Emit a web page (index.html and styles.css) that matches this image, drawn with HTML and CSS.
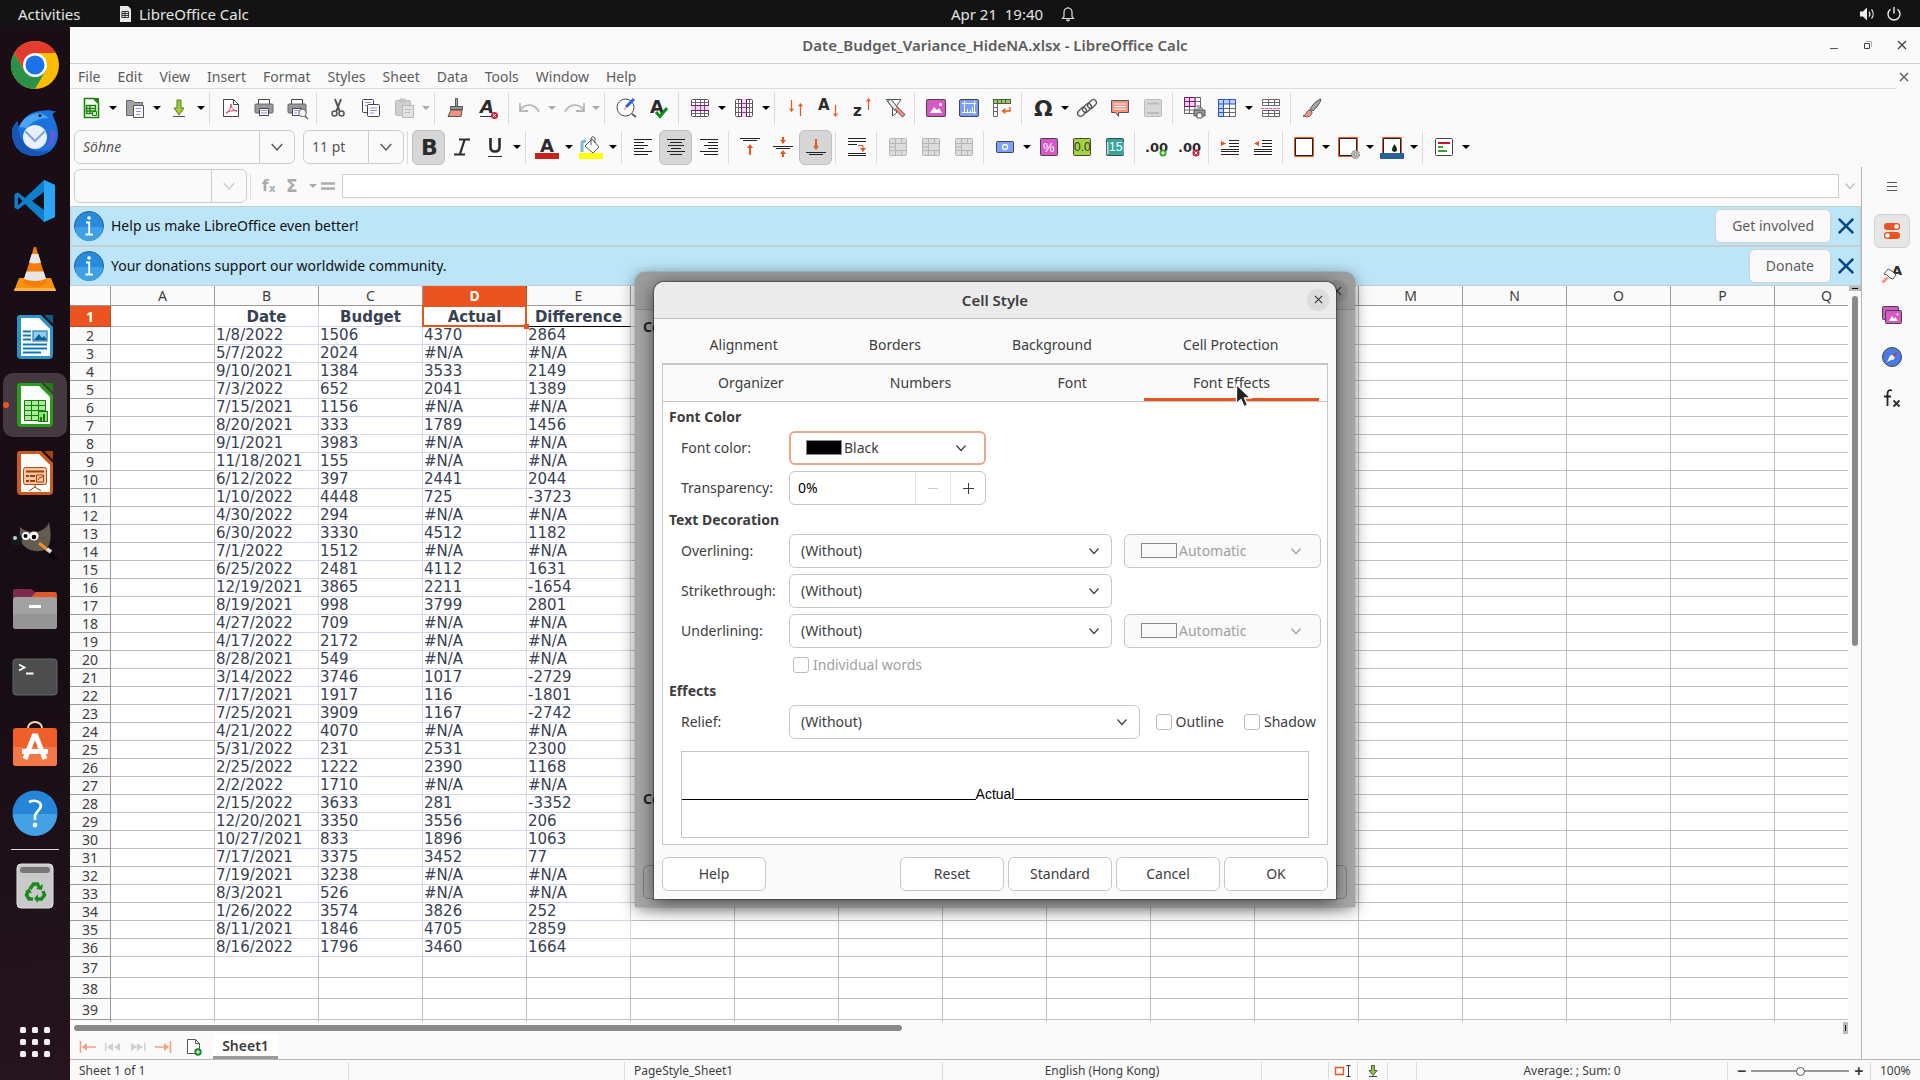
FILE: index.html
```html
<!DOCTYPE html>
<html lang="en">
<head>
    <meta charset="UTF-8">
    <title>Date_Budget_Variance_HideNA.xlsx - LibreOffice Calc</title>
    <meta name="viewport" content="width=device-width, initial-scale=1.0">
    <link rel="stylesheet" href="styles.css">
</head>
<body>
    <!-- shared shapes -->
    <svg class="defs" aria-hidden="true">
        <symbol id="chev" viewBox="0 0 12 12"><path d="M1.500 3.500 6 8.500 10.500 3.500" fill="none" stroke="currentColor" stroke-width="1.200"/></symbol>
        <symbol id="cross" viewBox="0 0 10 10"><path d="M1 1 9 9M9 1 1 9" fill="none" stroke="currentColor" stroke-width="1.400"/></symbol>
        <symbol id="merge" viewBox="0 0 24 24"><rect x="3.500" y="3.500" width="17" height="17" rx="1" fill="#dcdcdc" stroke="#b5b5b5"/><path d="M3 8.500h18M3 15.500h18M9.500 3v18M15.500 3v5M15.500 16v5M4 12h5" stroke="#b5b5b5" fill="none"/></symbol>
        <symbol id="info" viewBox="0 0 30 30"><circle cx="15" cy="15" r="14.500" fill="#2a8bdc" stroke="#24618f"/><path d="M1 16a14 14 0 0 0 28 0z" fill="#3fa0e6"/><circle cx="15" cy="7" r="1.800" fill="#fff"/><path d="M12 11.500h3.200v12M11.500 23.500h7.500" stroke="#fff" stroke-width="1.800" fill="none"/></symbol>
    </svg>

    <header class="topbar">
        <button class="top-btn">Activities</button>
        <button class="top-btn app-name">
            <svg width="12" height="16" viewBox="0 0 12 16"><path d="M1 0h8l3 3v13H1z" fill="#e8e8e8"/><path d="M3 5.500h6.500v6H3zM3 7.500h6.500M3 9.500h6.500M6 5v7" fill="none" stroke="#333"/></svg>
            LibreOffice Calc
        </button>
        <div class="clock">
            <span>Apr 21&nbsp; 19:40</span>
            <svg width="14" height="16" viewBox="0 0 14 16"><path d="M1.500 12.500h11l-1.500-2V6a4 4 0 0 0-8 0v4.500zM7 1v1.500" fill="none" stroke="#ddd" stroke-width="1.200"/><path d="M5 13.500a2 2 0 0 0 4 0z" fill="#ddd"/></svg>
        </div>
        <div class="tray">
            <svg width="16" height="16" viewBox="0 0 16 16"><path d="M1 5.500h3l4-4v13l-4-4H1z" fill="#eee"/><path d="M10 5.500a4 4 0 0 1 0 5M12.500 3.500a7 7 0 0 1 0 9" fill="none" stroke="#eee" stroke-width="1.200"/></svg>
            <svg width="16" height="16" viewBox="0 0 16 16"><path d="M4.500 3.200a6 6 0 1 0 7 0M8 1v6.500" fill="none" stroke="#eee" stroke-width="1.400"/></svg>
        </div>
    </header>

    <div class="desktop">
        <nav class="dock">
            <button class="dock-item" aria-label="Chrome">
                <svg width="48" height="48" viewBox="0 0 48 48"><circle cx="24" cy="24" r="24" fill="#fbbc04"/><path d="M3.200 12A24 24 0 0 1 44.800 12H24L13.600 30z" fill="#e33b2e"/><path d="M3.200 12A24 24 0 0 0 24 48l10.400-18-10.400 6-10.400-6z" fill="#2b9147"/><circle cx="24" cy="24" r="12" fill="#fff"/><circle cx="24" cy="24" r="9.500" fill="#1a73e8"/></svg>
            </button>
            <button class="dock-item" aria-label="Thunderbird">
                <svg width="48" height="48" viewBox="0 0 48 48"><path d="M1 20c2-4 4-7 6-8 0 3 0 5 1 6C12 8 20 3 29 2c6-1 11-1 17 1-3 0-5 1-4 4 4 8 5 14 5 18 0 13-10 22-23 22S0 38 1 20z" fill="#1a73dd"/><path d="M1 20c2-4 4-7 6-8-1 12 3 20 12 27 5 4 14 5 20 1-4 5-9 7-15 7C10 47 0 38 1 20z" fill="#1856b5"/><path d="M8 18C12 9 20 4 30 4l8 5c-9 0-17 3-22 10z" fill="#4aa5f4"/><circle cx="24" cy="28" r="12" fill="#e9f0fb"/><path d="M14 22l10 10 10-10" fill="none" stroke="#7ba4e4" stroke-width="2"/><path d="M38 21c4 7 1 15-6 19 9-2 14-10 12-18z" fill="#6a5ad8"/><circle cx="29" cy="6.500" r="1.500" fill="#123"/></svg>
            </button>
            <button class="dock-item" aria-label="VS Code">
                <svg width="44" height="44" viewBox="0 0 44 44"><path d="M31 1 12 19 5 13.500 1.500 15v14L5 30.500 12 25l19 18 11-5V6z" fill="#0f7fcb"/><path d="M31 1l11 5v32l-11 5z" fill="#2aa7f2"/><path d="M31 13v18L19 22zM5 17.500 9.500 22 5 26.500z" fill="#170d15"/></svg>
            </button>
            <button class="dock-item" aria-label="VLC">
                <svg width="44" height="48" viewBox="0 0 44 48"><path d="M6 33h32l5 13H1z" fill="#f8910c"/><path d="M21 2h2l11 36q-12 7-24 0z" fill="#f47c09"/><path d="M18.700 9h6.600l2.700 8.500q-6 2-12 0zM13.300 26.500h17.400l2.400 7.500q-11 4-22.200 0z" fill="#e6e6e6"/><path d="M2 43h40l1 3H1z" fill="#ffb347"/></svg>
            </button>
            <button class="dock-item" aria-label="Writer">
                <svg width="38" height="46" viewBox="0 0 38 46"><path d="M4 1h21l12 12v28q0 4-4 4H5q-4 0-4-4V4q0-3 3-3z" fill="#2a93c9"/><path d="M28 1h9v9z" fill="#0c5c8c"/><path d="M5 4h18l11 11v27H5z" fill="#fff"/><path d="M7 17.500h8M7 21.500h8M7 25.500h8M7 30.500h24M7 34.500h24M7 38.500h18" stroke="#0a78c0" stroke-width="2"/><rect x="17" y="17" width="14" height="10" fill="#8fd0f0" stroke="#0a5f96"/><path d="M18 26l5-6 3 4 2-2 3 4z" fill="#0a5f96"/></svg>
            </button>
            <button class="dock-item active" aria-label="Calc">
                <svg width="38" height="46" viewBox="0 0 38 46"><path d="M4 1h21l12 12v28q0 4-4 4H5q-4 0-4-4V4q0-3 3-3z" fill="#2a9c1c"/><path d="M28 1h9v9z" fill="#208010"/><path d="M5 4h18l11 11v27H5z" fill="#fff"/><path d="M8.500 18.500h21v20h-21zM8.500 23.500h21M8.500 28.500h21M8.500 33.500h21M15.500 18v20M22.500 18v20" fill="#a8ec9c" stroke="#148008"/><rect x="22.500" y="29.500" width="9" height="10" fill="#8be080" stroke="#148008"/><path d="M25 39v-4M28 39v-7" stroke="#148008" stroke-width="2"/></svg>
            </button>
            <button class="dock-item" aria-label="Impress">
                <svg width="38" height="46" viewBox="0 0 38 46"><path d="M4 1h21l12 12v28q0 4-4 4H5q-4 0-4-4V4q0-3 3-3z" fill="#cc5a1c"/><path d="M28 1h9v9z" fill="#a8400c"/><path d="M5 4h18l11 11v27H5z" fill="#fff"/><rect x="7.500" y="17.500" width="23" height="17" rx="2" fill="#f8c8a4" stroke="#b04c10"/><path d="M10 21.500h18M10 26h3M10 31h3M14 26h5M14 31h5" stroke="#a03c08" stroke-width="2"/><path d="M20.500 25h7v7h-7zM22 30l2-3 1 1 2-2M19 35v2l-6 4M19 37l6 4" fill="none" stroke="#a03c08"/></svg>
            </button>
            <button class="dock-item" aria-label="GIMP">
                <svg width="48" height="42" viewBox="0 0 48 42"><path d="M9 7c5 5 14 6 20 4 5-2 8-5 9-9 2 10 3 20-2 26-5 5-17 4-23-2C8 21 9 14 9 7z" fill="#625c50"/><ellipse cx="5.500" cy="20" rx="5.500" ry="6" fill="#15191c"/><circle cx="4" cy="18" r="2" fill="#b8d0dc"/><circle cx="15" cy="16" r="4" fill="#fff"/><circle cx="23" cy="16" r="4.500" fill="#fff"/><circle cx="14.500" cy="16" r="2"/><circle cx="23" cy="17" r="2.300"/><path d="M28 23l10 8" stroke="#e8912d" stroke-width="3"/><path d="M36 29l5 2 6 9q-8-1-11-7z" fill="#050505"/><path d="M36 29l4 3" stroke="#ddd" stroke-width="4"/></svg>
            </button>
            <button class="dock-item" aria-label="Files">
                <svg width="46" height="42" viewBox="0 0 46 42"><path d="M1 3q0-2 2-2h16l4 3h19q3 0 3 3v8H1z" fill="#7d2a4c"/><path d="M24 4h18q3 0 3 3v6H16z" fill="#e2562a"/><rect x="1" y="9" width="44" height="32" rx="3" fill="#a2a2a2"/><path d="M1 26h44v12q0 3-3 3H4q-3 0-3-3z" fill="#959595"/><path d="M17 18.500h12" stroke="#fff" stroke-width="3"/></svg>
            </button>
            <button class="dock-item" aria-label="Terminal">
                <svg width="46" height="38" viewBox="0 0 46 38"><rect x="1" y="1" width="44" height="36" rx="3" fill="#4d4d4d" stroke="#5e6668"/><path d="M7 6.500 12.500 9.500 7 12.500M14 15.500h7.500" fill="none" stroke="#fff" stroke-width="1.800"/></svg>
            </button>
            <button class="dock-item" aria-label="Software">
                <svg width="46" height="46" viewBox="0 0 46 46"><path d="M16 7V6a7 6 0 0 1 14 0v1" fill="none" stroke="#f3d9a4" stroke-width="2"/><rect x="1" y="6" width="44" height="38" rx="3" fill="#ee5f2a"/><path d="M1 25h44v16q0 3-3 3H4q-3 0-3-3z" fill="#f37747"/><path d="M13 37 22 14h2l9 23M10 29.500h26" fill="none" stroke="#fff" stroke-width="5"/></svg>
            </button>
            <button class="dock-item" aria-label="Help">
                <svg width="46" height="46" viewBox="0 0 46 46"><circle cx="23" cy="23" r="22.500" fill="#2585d8"/><path d="M1 24a22 22 0 0 0 44 0z" fill="#43a1e6"/><path d="M17 12q7-3 11 1c4 5-5 9-5 13v4" fill="none" stroke="#fff" stroke-width="2.600"/><circle cx="23" cy="35" r="2.400" fill="#fff"/></svg>
            </button>
            <hr class="dock-line">
            <button class="dock-item" aria-label="Trash">
                <svg width="38" height="46" viewBox="0 0 38 46"><rect x="1" y="1" width="36" height="44" rx="4" fill="#c9c9c9" stroke="#e2e2e2"/><rect x="4" y="4" width="30" height="6" rx="3" fill="#757575"/><path d="M14 26l3.500-5h4l2 4M27 28l1.500 4-3 4h-4M17 36h-4l-2.500-4 2-4" fill="none" stroke="#1c8a1c" stroke-width="3.500"/><path d="M20 26l6 1 1-6zM22 31v9l-4-4.500zM9 29l4-4 3 5z" fill="#1c8a1c"/></svg>
            </button>
            <button class="dock-item apps" aria-label="Show Applications">
                <svg width="30" height="30" viewBox="0 0 30 30" fill="#f0f0f0"><rect width="6" height="6" rx="1.500"/><rect x="12" width="6" height="6" rx="1.500"/><rect x="24" width="6" height="6" rx="1.500"/><rect y="12" width="6" height="6" rx="1.500"/><rect x="12" y="12" width="6" height="6" rx="1.500"/><rect x="24" y="12" width="6" height="6" rx="1.500"/><rect y="24" width="6" height="6" rx="1.500"/><rect x="12" y="24" width="6" height="6" rx="1.500"/><rect x="24" y="24" width="6" height="6" rx="1.500"/></svg>
            </button>
        </nav>

        <div class="window">
            <div class="titlebar">
                <h1>Date_Budget_Variance_HideNA.xlsx - LibreOffice Calc</h1>
                <div class="win-btns">
                    <button aria-label="Minimize"><svg width="10" height="10"><path d="M1 8.500h8" stroke="#555"/></svg></button>
                    <button aria-label="Restore"><svg width="10" height="10"><path d="M1.500 3.500h5v5h-5z" fill="none" stroke="#444"/><path d="M3 1.500h5.500V7" fill="none" stroke="#aaa"/></svg></button>
                    <button aria-label="Close"><svg width="10" height="10"><use href="#cross"/></svg></button>
                </div>
            </div>
            <div class="menubar">
                <nav class="menus">
                    <button>File</button><button>Edit</button><button>View</button><button>Insert</button><button>Format</button><button>Styles</button><button>Sheet</button><button>Data</button><button>Tools</button><button>Window</button><button>Help</button>
                </nav>
                <button class="close-doc" aria-label="Close Document"><svg width="10" height="10"><use href="#cross"/></svg></button>
            </div>

            <!-- Standard toolbar -->
            <div class="toolbar">
                <div class="split"><button class="tool" aria-label="New"><svg viewBox="0 0 24 24"><path d="M5.500 2.500h9l5 5v14h-14z" fill="#fff" stroke="#18850a" stroke-width="1.600"/><path d="M14 2h6v6z" fill="#18850a"/><path d="M7.500 9.500h9v8h-9zM7 12.500h10M7 15h10M11 9v9" fill="none" stroke="#18850a" stroke-width="1.500"/><path d="M13.500 15.500h4v4h-4z" fill="#cdebc8" stroke="#18850a"/></svg></button><button class="drop" aria-label="New options"></button></div>
                <div class="split"><button class="tool" aria-label="Open"><svg viewBox="0 0 24 24"><path d="M3.500 4.500h6l2 2h8v13h-16z" fill="#a3a3a3" stroke="#666"/><path d="M10.500 9.500h10v12h-10z" fill="#fff" stroke="#555"/><path d="M13 12.500h5M13 15.500h5M13 18.500h4" stroke="#8d8df0"/></svg></button><button class="drop" aria-label="Open options"></button></div>
                <div class="split"><button class="tool" aria-label="Save"><svg viewBox="0 0 24 24"><path d="M10 4h4v8h3l-5 7-5-7h3z" fill="#9ed036" stroke="#5a7a22"/><path d="M6 20.500h12" stroke="#555"/></svg></button><button class="drop" aria-label="Save options"></button></div>
                <i class="sep"></i>
                <button class="tool" aria-label="Export PDF"><svg viewBox="0 0 24 24"><path d="M4.500 3.500h10l5 5v12h-15z" fill="#fff" stroke="#444"/><path d="M14.500 3.500v5h5" fill="none" stroke="#444"/><path d="M7 17c3-1 5-5 5-9 0 4 2 6 6 7-4-1-8 0-11 2z" fill="none" stroke="#e23c5c"/></svg></button>
                <button class="tool" aria-label="Print"><svg viewBox="0 0 24 24"><path d="M6.500 8V3.500h11V8" fill="#fff" stroke="#444"/><rect x="3" y="8" width="18" height="9" rx="1" fill="#999" stroke="#666"/><path d="M7.500 12.500h9v7h-9z" fill="#fff" stroke="#444"/><path d="M9 14.500h6M9 17h6" stroke="#8d8df0"/></svg></button>
                <button class="tool" aria-label="Print Preview"><svg viewBox="0 0 24 24"><path d="M6.500 8V3.500h11V8" fill="#fff" stroke="#444"/><rect x="3" y="8" width="18" height="9" rx="1" fill="#999" stroke="#666"/><path d="M7.500 12.500h9v7h-9z" fill="#fff" stroke="#444"/><path d="M9 14.500h6M9 17h3" stroke="#8d8df0"/><circle cx="17.500" cy="17" r="3.800" fill="#f4f4f4" stroke="#666"/><path d="M20 20l3 3" stroke="#666" stroke-width="1.500"/></svg></button>
                <i class="sep"></i>
                <button class="tool" aria-label="Cut"><svg viewBox="0 0 24 24" fill="none" stroke="#555"><path d="M9 3l4.500 12M15 3l-4.500 12" stroke-width="2"/><circle cx="8.500" cy="17.500" r="2.500" stroke-width="1.500"/><circle cx="15.500" cy="17.500" r="2.500" stroke-width="1.500"/></svg></button>
                <button class="tool" aria-label="Copy"><svg viewBox="0 0 24 24" fill="#fff" stroke="#444"><rect x="3.500" y="3.500" width="11" height="13" rx="1"/><path d="M6 6.500h6M6 9.500h4" stroke="#8d8df0"/><rect x="8.500" y="8.500" width="12" height="12" rx="1"/><path d="M11 12h7M11 14.500h7M11 17h4" stroke="#8d8df0"/></svg></button>
                <div class="split"><button class="tool" aria-label="Paste" disabled><svg viewBox="0 0 24 24" fill="#cfcfcf" stroke="#b8b8b8"><rect x="3.500" y="4.500" width="15" height="15" rx="1"/><path d="M8 3h5v3H8z"/><rect x="10.500" y="9.500" width="11" height="12" fill="#e2e2e2"/><path d="M13 13.500h6M13 16.500h5"/></svg></button><button class="drop" aria-label="Paste options" disabled></button></div>
                <i class="sep"></i>
                <button class="tool" aria-label="Clone Formatting"><svg viewBox="0 0 24 24"><path d="M11.500 2.500h2v8h-2z" fill="#aaa" stroke="#555"/><path d="M6.500 10.500h12v3h-12z" fill="#999" stroke="#555"/><path d="M7 14h11l-1 6.500H4z" fill="#fa9080" stroke="#555"/></svg></button>
                <button class="tool" aria-label="Clear Formatting"><svg viewBox="0 0 24 24"><text class="glyph it" x="3" y="17" font-size="18">A</text><path d="M3 20.500h13" stroke="#333"/><circle cx="17.500" cy="19.500" r="3.500" fill="#d0203c"/><path d="M16 18l3 3M19 18l-3 3" stroke="#fff"/></svg></button>
                <i class="sep"></i>
                <div class="split"><button class="tool" aria-label="Undo" disabled><svg viewBox="0 0 24 24" fill="none" stroke="#b8b8b8" stroke-width="1.800"><path d="M2 15c4-8 15-8 19 1M2 7v8h8"/></svg></button><button class="drop" aria-label="Undo list" disabled></button></div>
                <div class="split"><button class="tool" aria-label="Redo" disabled><svg viewBox="0 0 24 24" fill="none" stroke="#b8b8b8" stroke-width="1.800"><path d="M22 15C18 7 7 7 3 16M22 7v8h-8"/></svg></button><button class="drop" aria-label="Redo list" disabled></button></div>
                <i class="sep"></i>
                <button class="tool" aria-label="Find"><svg viewBox="0 0 24 24"><circle cx="11.500" cy="11.500" r="8.500" fill="#fff" stroke="#444"/><path d="M18 18l4 3" stroke="#555" stroke-width="1.600"/><path d="M12 11 20 3" stroke="#2a62e0" stroke-width="3"/><path d="M9.500 14l1-3 2 2z" fill="#f4a460"/></svg></button>
                <button class="tool" aria-label="Spelling"><svg viewBox="0 0 24 24"><text class="glyph" x="3" y="17" font-size="18">A</text><path d="M9 16l4 4.500L20 12" fill="none" stroke="#0c8a1c" stroke-width="3"/></svg></button>
                <i class="sep"></i>
                <div class="split"><button class="tool" aria-label="Row"><svg viewBox="0 0 24 24"><rect x="3.500" y="3.500" width="17" height="17" rx="1" fill="#fff" stroke="#555"/><path d="M3 9h18v5H3z" fill="#f3d3f0"/><path d="M7.500 3v18M12.500 3v18M16.500 3v18M3 6.500h18M3 17.500h18" stroke="#666"/><path d="M3 9.500h18M3 14.500h18" stroke="#7b1574"/></svg></button><button class="drop" aria-label="Row options"></button></div>
                <div class="split"><button class="tool" aria-label="Column"><svg viewBox="0 0 24 24"><rect x="3.500" y="3.500" width="17" height="17" rx="1" fill="#fff" stroke="#555"/><path d="M9 3h5v18H9z" fill="#f3d3f0"/><path d="M3 7.500h18M3 11.500h18M3 16.500h18M6.500 3v18M17.500 3v18" stroke="#666"/><path d="M9.500 3v18M14.500 3v18" stroke="#7b1574"/></svg></button><button class="drop" aria-label="Column options"></button></div>
                <i class="sep"></i>
                <button class="tool" aria-label="Sort"><svg viewBox="0 0 24 24" fill="none" stroke="#e95420" stroke-width="1.200"><path d="M7.500 4v11M5.500 12.500l2 2.500 2-2.500M16.500 20V8M14.500 10.500l2-2.500 2 2.500"/></svg></button>
                <button class="tool" aria-label="Sort Ascending"><svg viewBox="0 0 24 24"><text class="glyph" x="1" y="14" font-size="15">A</text><path d="M18.500 9v11M16.500 17.500l2 2.500 2-2.500" fill="none" stroke="#e95420" stroke-width="1.200"/></svg></button>
                <button class="tool" aria-label="Sort Descending"><svg viewBox="0 0 24 24"><text class="glyph" x="3" y="20" font-size="15">z</text><path d="M18.500 14V3M16.500 5.500l2-2.500 2 2.500" fill="none" stroke="#e95420" stroke-width="1.200"/></svg></button>
                <button class="tool" aria-label="AutoFilter"><svg viewBox="0 0 24 24"><path d="M3 3.500h15L13.500 10v7l-4 3v-9z" fill="#fff" stroke="#555"/><path d="M6 4l8 10" stroke="#555" stroke-width="5"/><path d="M6.500 4.500l7.500 9.500" stroke="#eee" stroke-width="3"/><path d="M13 12l8 8" stroke="#555" stroke-width="4"/><path d="M13 12l7.500 7.500" stroke="#fa9080" stroke-width="2.500"/></svg></button>
                <i class="sep"></i>
                <button class="tool" aria-label="Image"><svg viewBox="0 0 24 24"><rect x="2.500" y="3.500" width="19" height="17" rx="1.500" fill="#d858c8" stroke="#444"/><path d="M6 17l4-6 3 3 2-2 3 5z" fill="#fff"/><circle cx="16.500" cy="8.500" r="1.500" fill="#fff"/></svg></button>
                <button class="tool" aria-label="Chart"><svg viewBox="0 0 24 24"><rect x="2.500" y="3.500" width="19" height="17" rx="1.500" fill="#7aa0fb" stroke="#444"/><path d="M7.500 5v12M5 7.500h14M5 16.500h14M17.500 5v13M10.500 16v-3M13.500 16v-2M15.500 16v-5" stroke="#fff" fill="none"/></svg></button>
                <button class="tool" aria-label="Pivot Table"><svg viewBox="0 0 24 24"><rect x="3.500" y="3.500" width="17" height="4" fill="#8fd048" stroke="#555"/><path d="M7.500 4v3M11.500 4v3M15.500 4v3" stroke="#555"/><path d="M3.500 8v12.500h4V8M4 11.500h3M4 15.500h3" fill="#fff" stroke="#666"/><path d="M20 11v4h-7M15.500 12.500 12.500 15l3 2.500" fill="none" stroke="#e95420" stroke-width="1.300"/></svg></button>
                <i class="sep"></i>
                <div class="split"><button class="tool" aria-label="Special Character"><svg viewBox="0 0 24 24"><text class="glyph" x="3" y="20" font-size="22">Ω</text></svg></button><button class="drop" aria-label="Special characters"></button></div>
                <button class="tool" aria-label="Hyperlink"><svg viewBox="0 0 24 24" fill="none" stroke="#555" stroke-width="1.300"><rect x="2" y="13" width="10" height="6" rx="3" transform="rotate(-45 7 16)"/><rect x="7" y="9" width="10" height="6" rx="3" transform="rotate(-45 12 12)"/><rect x="12" y="5" width="10" height="6" rx="3" transform="rotate(-45 17 8)"/></svg></button>
                <button class="tool" aria-label="Comment"><svg viewBox="0 0 24 24"><path d="M3.500 4.500h17v12h-10v4l-3-4h-4z" fill="#fa9080" stroke="#555"/><path d="M6 8h12M6 10.500h12M6 13h12" stroke="#fff"/></svg></button>
                <button class="tool" aria-label="Headers and Footers" disabled><svg viewBox="0 0 24 24"><rect x="3.500" y="3.500" width="17" height="17" rx="1" fill="#d8d8d8" stroke="#bbb"/><path d="M6 7.500h12M6 17h12" stroke="#bbb" stroke-width="2"/></svg></button>
                <i class="sep"></i>
                <button class="tool" aria-label="Print Area"><svg viewBox="0 0 24 24"><path d="M2.500 1.500h16v16h-16zM2 5.500h17M2 10h17M2 14h17M7.500 1v17M13 1v17" fill="#fff" stroke="#666"/><path d="M2.500 1.500h10.500V10.500H2.500zM7.500 1v10M2 5.500h11" fill="#f3d3f0" stroke="#7b1574"/><path d="M12 14h11v6H12z" fill="#999" stroke="#555"/><path d="M15 12h5v2M15 17h5v5h-5z" fill="#fff" stroke="#555"/></svg></button>
                <div class="split"><button class="tool" aria-label="Freeze Rows and Columns"><svg viewBox="0 0 24 24"><path d="M3.500 3.500h17v17h-17z" fill="#fff" stroke="#666"/><path d="M3.500 3.500h17V8h-12v12.500h-5z" fill="#bcd0fb"/><path d="M8.500 8v13M14.500 8v13M8 12.500h13M8 16.500h13" stroke="#666"/><path d="M3.500 20.500v-17h17V8h-12v12.500zM3 12.500h5M3 16.500h5M8.500 3v5M14.500 3v5M3 8h6" fill="none" stroke="#2a56c8"/></svg></button><button class="drop" aria-label="Freeze options"></button></div>
                <button class="tool" aria-label="Split Window"><svg viewBox="0 0 24 24"><path d="M3.500 3.500h17v6h-17zM3 6.500h18M9.500 3v7M15.500 3v7M3.500 14.500h17v6h-17zM3 17.500h18M9.500 14v7M15.500 14v7" fill="#fff" stroke="#666"/><path d="M2 12.500h20" stroke="#e858c8" stroke-dasharray="3 1"/></svg></button>
                <i class="sep"></i>
                <button class="tool" aria-label="Draw Functions"><svg viewBox="0 0 24 24"><path d="M21 3c-6 2-9 7-11 10l3 2c3-3 7-7 8-12z" fill="#a5a5a5" stroke="#555"/><path d="M10 14c-4 0-3 5-7 6 5 2 9 0 9-4z" fill="#fa9080" stroke="#555"/></svg></button>
            </div>

            <!-- Formatting toolbar -->
            <div class="toolbar">
                <div class="combo font-name"><input type="text" value="Söhne" aria-label="Font Name"><button aria-label="Font list"><svg width="14" height="14"><use href="#chev"/></svg></button></div>
                <div class="combo font-size"><input type="text" value="11 pt" aria-label="Font Size"><button aria-label="Size list"><svg width="14" height="14"><use href="#chev"/></svg></button></div>
                <i class="sep"></i>
                <button class="tool on" aria-label="Bold"><svg viewBox="0 0 24 24"><text class="glyph" x="4" y="20" font-size="22">B</text></svg></button>
                <button class="tool" aria-label="Italic"><svg viewBox="0 0 24 24"><path d="M9 4.500h11M4 19.500h11M14.500 5 10 19" stroke="#2b2b2b" stroke-width="2.200"/></svg></button>
                <div class="split"><button class="tool" aria-label="Underline"><svg viewBox="0 0 24 24"><path d="M7.500 3v9q0 4.500 4.500 4.500t4.500-4.500V3" fill="none" stroke="#2b2b2b" stroke-width="2.600"/><path d="M5 21.500h14" stroke="#2b2b2b"/></svg></button><button class="drop" aria-label="Underline options"></button></div>
                <i class="sep"></i>
                <div class="split"><button class="tool" aria-label="Font Color"><svg viewBox="0 0 24 24"><text class="glyph" x="5" y="17" font-size="18">A</text><path d="M0 18h24v6H0z" fill="#c9211e"/></svg></button><button class="drop" aria-label="Font colors"></button></div>
                <div class="split"><button class="tool" aria-label="Highlighting"><svg viewBox="0 0 24 24"><path d="M3 17V8q0-2 4-2" fill="none" stroke="#7fb8d0" stroke-width="3"/><path d="M13 4l7 8-6 6-8-7z" fill="#fff" stroke="#555"/><path d="M12 10V3q2-3 4 0v5" fill="none" stroke="#555"/><path d="M0 18h24v6H0z" fill="#ff0"/></svg></button><button class="drop" aria-label="Highlight colors"></button></div>
                <i class="sep"></i>
                <button class="tool" aria-label="Align Left"><svg viewBox="0 0 24 24" stroke="#222"><path d="M3 4.500h18M3 7.500h10M3 10.500h14M3 13.500h10M3 16.500h18M3 19.500h14"/></svg></button>
                <button class="tool on" aria-label="Align Center"><svg viewBox="0 0 24 24" stroke="#222"><path d="M3 4.500h18M6 7.500h12M4 10.500h16M7 13.500h10M3 16.500h18M6 19.500h12"/></svg></button>
                <button class="tool" aria-label="Align Right"><svg viewBox="0 0 24 24" stroke="#222"><path d="M3 4.500h18M11 7.500h10M7 10.500h14M11 13.500h10M3 16.500h18M7 19.500h14"/></svg></button>
                <i class="sep"></i>
                <button class="tool" aria-label="Align Top"><svg viewBox="0 0 24 24"><path d="M2 3.500h20M5 5.500h14" stroke="#222"/><path d="M12 20V11" stroke="#e95420" stroke-width="2"/><path d="M9 13l3-4 3 4z" fill="#e95420"/></svg></button>
                <button class="tool" aria-label="Center Vertically"><svg viewBox="0 0 24 24"><path d="M2 11.500h20M5 13.500h14" stroke="#222"/><path d="M12 2v4M12 22v-4" stroke="#e95420" stroke-width="2"/><path d="M9 5l3 4 3-4zM9 19l3-4 3 4z" fill="#e95420"/></svg></button>
                <button class="tool on" aria-label="Align Bottom"><svg viewBox="0 0 24 24"><path d="M2 17.500h20M5 19.500h14" stroke="#222"/><path d="M12 4v8" stroke="#e95420" stroke-width="2"/><path d="M9 11l3 4 3-4z" fill="#e95420"/></svg></button>
                <i class="sep"></i>
                <button class="tool" aria-label="Wrap Text"><svg viewBox="0 0 24 24"><path d="M3 3.500h18M3 6.500h18M3 9.500h9M3 18.500h18M3 20.500h18" stroke="#222"/><path d="M13 10.500h5v3" fill="none" stroke="#e95420"/><path d="M15 13h6l-3 4z" fill="#e95420"/></svg></button>
                <i class="sep"></i>
                <button class="tool" aria-label="Merge and Center" disabled><svg><use href="#merge"/></svg></button>
                <button class="tool" aria-label="Merge Cells" disabled><svg><use href="#merge"/></svg></button>
                <button class="tool" aria-label="Unmerge Cells" disabled><svg><use href="#merge"/></svg></button>
                <i class="sep"></i>
                <div class="split"><button class="tool" aria-label="Currency"><svg viewBox="0 0 24 24"><rect x="3.500" y="6.500" width="17" height="11" rx="1" fill="#7aa0fb" stroke="#444"/><circle cx="12" cy="12" r="2.500" fill="none" stroke="#fff" stroke-width="1.300"/></svg></button><button class="drop" aria-label="Currencies"></button></div>
                <button class="tool" aria-label="Percent"><svg viewBox="0 0 24 24"><rect x="3.500" y="3.500" width="17" height="17" rx="1" fill="#d858c8" stroke="#444"/><text class="sign" x="6" y="17" font-size="13" fill="#fff">%</text></svg></button>
                <button class="tool" aria-label="Number"><svg viewBox="0 0 24 24"><rect x="3.500" y="3.500" width="17" height="17" rx="1" fill="#a4d440" stroke="#444"/><text class="sign" x="4" y="16" font-size="12" fill="#333">0.0</text></svg></button>
                <button class="tool" aria-label="Date"><svg viewBox="0 0 24 24"><rect x="3.500" y="3.500" width="17" height="17" rx="1" fill="#35a89c" stroke="#444"/><text class="sign" x="3" y="16" font-size="12" fill="#fff">|15|</text></svg></button>
                <i class="sep"></i>
                <button class="tool" aria-label="Add Decimal Place"><svg viewBox="0 0 24 24"><text class="glyph" x="1" y="17" font-size="13">.00</text><circle cx="19" cy="18" r="3.500" fill="#3aa42a"/><path d="M19 16v4M17 18h4" stroke="#fff"/></svg></button>
                <button class="tool" aria-label="Delete Decimal Place"><svg viewBox="0 0 24 24"><text class="glyph" x="1" y="17" font-size="13">.00</text><circle cx="19" cy="18" r="3.500" fill="#d0203c"/><path d="M17.500 16.500l3 3M20.500 16.500l-3 3" stroke="#fff"/></svg></button>
                <i class="sep"></i>
                <button class="tool" aria-label="Increase Indent"><svg viewBox="0 0 24 24"><path d="M11 5.500h10M11 8.500h10M11 11.500h10M3 14.500h18M3 16.500h18M3 19.500h18" stroke="#222"/><path d="M3 6l5 2.500L3 11z" fill="#e95420"/></svg></button>
                <button class="tool" aria-label="Decrease Indent"><svg viewBox="0 0 24 24"><path d="M11 5.500h10M11 8.500h10M11 11.500h10M3 14.500h18M3 16.500h18M3 19.500h18" stroke="#222"/><path d="M8 6 3 8.500 8 11z" fill="#e95420"/></svg></button>
                <i class="sep"></i>
                <div class="split"><button class="tool" aria-label="Borders"><svg viewBox="0 0 24 24"><path d="M2.500 2.500h19v19h-19z" fill="#fff" stroke="#e95420"/><path d="M3.500 3.500h17v17h-17z" fill="none" stroke="#222"/></svg></button><button class="drop" aria-label="Border options"></button></div>
                <div class="split"><button class="tool" aria-label="Border Style"><svg viewBox="0 0 24 24"><path d="M2.500 2.500h19v19h-19z" fill="#fff" stroke="#e95420"/><path d="M3.500 3.500h17v17h-17z" fill="none" stroke="#222"/><circle cx="19.500" cy="19.500" r="4" fill="#bbb" stroke="#777" stroke-dasharray="2 1"/><circle cx="19.500" cy="19.500" r="1.300" fill="#fff" stroke="#777"/></svg></button><button class="drop" aria-label="Border styles"></button></div>
                <div class="split"><button class="tool" aria-label="Border Color"><svg viewBox="0 0 24 24"><path d="M2.500 20V2.500h19V20" fill="#fff" stroke="#e95420"/><path d="M3.500 20V3.500h17V20" fill="none" stroke="#222"/><path d="M14.500 9q5 7 0 8-5-1 0-8z" fill="#222"/><path d="M0 18h24v6H0z" fill="#2a6099"/></svg></button><button class="drop" aria-label="Border colors"></button></div>
                <i class="sep"></i>
                <div class="split"><button class="tool" aria-label="Conditional"><svg viewBox="0 0 24 24"><rect x="3.500" y="3.500" width="17" height="17" rx="1" fill="#fff" stroke="#444"/><path d="M6 8h12" stroke="#c9102e" stroke-width="2"/><path d="M6 12h5M6 16h9" stroke="#3aa42a" stroke-width="2"/></svg></button><button class="drop" aria-label="Conditional options"></button></div>
            </div>

            <div class="body">
                <main class="main">
                    <div class="formula-bar">
                        <div class="combo name-box"><input type="text" aria-label="Name Box"><button aria-label="Names" disabled><svg width="14" height="14"><use href="#chev"/></svg></button></div>
                        <i class="sep"></i>
                        <button class="fn" aria-label="Function Wizard"><svg viewBox="0 0 20 20"><text class="glyph dim" x="3" y="15" font-size="15">f</text><text class="glyph dim" x="10" y="16" font-size="10">x</text></svg></button>
                        <button class="fn" aria-label="Select Function"><svg viewBox="0 0 20 20"><text class="glyph dim" x="3" y="16" font-size="17">Σ</text></svg></button>
                        <button class="drop" aria-label="Functions" disabled></button>
                        <button class="fn" aria-label="Formula"><svg viewBox="0 0 20 20"><path d="M3 7.500h14M3 12.500h14" stroke="#aaa" stroke-width="2.500"/></svg></button>
                        <input class="formula" type="text" aria-label="Input line">
                        <button class="expand" aria-label="Expand Formula Bar" disabled><svg width="12" height="12"><use href="#chev"/></svg></button>
                    </div>
                    <div class="infobar">
                        <svg width="30" height="30"><use href="#info"/></svg>
                        <span>Help us make LibreOffice even better!</span>
                        <button class="btn">Get involved</button>
                        <button class="info-x" aria-label="Close Infobar"><svg width="18" height="18"><use href="#cross"/></svg></button>
                    </div>
                    <div class="infobar">
                        <svg width="30" height="30"><use href="#info"/></svg>
                        <span>Your donations support our worldwide community.</span>
                        <button class="btn">Donate</button>
                        <button class="info-x" aria-label="Close Infobar"><svg width="18" height="18"><use href="#cross"/></svg></button>
                    </div>
                    <div class="sheet-area">
                        <div class="sheet-clip">
                            <table class="sheet" id="sheet"></table>
                        </div>
                        <div class="vscroll"><div class="grip"></div><div class="thumb"></div></div>
                    </div>
                    <div class="hscroll"><div class="thumb"></div><div class="grip"></div></div>
                    <div class="tabbar">
                        <button class="nav" aria-label="First Sheet"><svg width="18" height="14" viewBox="0 0 18 14"><path d="M1.500 1v12M4 7h13" stroke="#f4a080" stroke-width="1.600"/><path d="M3 7l5-4v8z" fill="#f4a080"/></svg></button>
                        <button class="nav" aria-label="Previous Sheet"><svg width="16" height="10" viewBox="0 0 16 10" fill="#d0d0d0"><path d="M0 1h1.500v8H0zM8 1v8L2 5zM15 1v8L9 5z"/></svg></button>
                        <button class="nav" aria-label="Next Sheet"><svg width="16" height="10" viewBox="0 0 16 10" fill="#d0d0d0"><path d="M14 1h1.500v8H14zM7 1v8l6-4zM1 1v8l6-4z"/></svg></button>
                        <button class="nav" aria-label="Last Sheet"><svg width="18" height="14" viewBox="0 0 18 14"><path d="M16.500 1v12M1 7h13" stroke="#f4a080" stroke-width="1.600"/><path d="M15 7l-5-4v8z" fill="#f4a080"/></svg></button>
                        <button class="nav add" aria-label="Add Sheet"><svg width="16" height="18" viewBox="0 0 16 18"><path d="M1.500 1.500h8l4 4v10h-12z" fill="#fff" stroke="#555"/><path d="M9.500 1.500v4h4" fill="none" stroke="#555"/><circle cx="12" cy="14" r="3.700" fill="#188a2a"/><path d="M12 12v4M10 14h4" stroke="#fff"/></svg></button>
                        <button class="sheet-tab">Sheet1</button>
                    </div>
                </main>
                <aside class="sidebar">
                    <button class="side" aria-label="Sidebar Settings"><svg width="10" height="10"><path d="M0 .5h10M0 4.500h10M0 8.500h10" stroke="#555"/></svg></button>
                    <button class="side on" aria-label="Properties"><svg width="20" height="20" viewBox="0 0 20 20" fill="#e95420"><rect x="2" y="2" width="16" height="7" rx="3"/><rect x="2" y="11" width="16" height="7" rx="3"/><circle cx="14.500" cy="5.500" r="2.200" fill="#fff"/><circle cx="5.500" cy="14.500" r="2.200" fill="#fff"/></svg></button>
                    <button class="side" aria-label="Styles"><svg width="22" height="22" viewBox="0 0 22 22"><text class="glyph" x="11" y="13" font-size="13">A</text><path d="M1.500 20.500l5-5" stroke="#fa9080" stroke-width="3"/><path d="M3 12l4-5 4 2 4 4-3 4-3-1-3-3z" fill="#fff" stroke="#555"/></svg></button>
                    <button class="side" aria-label="Gallery"><svg width="22" height="20" viewBox="0 0 22 20"><rect x="1.500" y="1.500" width="16" height="13" rx="1" fill="#d858c8" stroke="#444"/><rect x="4.500" y="5.500" width="16" height="13" rx="1" fill="#d858c8" stroke="#444"/><path d="M8 16l3-5 2 3 1-2 3 4z" fill="#fff"/><circle cx="16.500" cy="9.500" r="1" fill="#fff"/></svg></button>
                    <button class="side" aria-label="Navigator"><svg width="20" height="20" viewBox="0 0 20 20"><circle cx="10" cy="10" r="9.500" fill="#4a7ae4" stroke="#444"/><path d="M5 15l3-6 3 3z" fill="#fff"/><circle cx="10" cy="10.500" r="2.500" fill="#eee"/><path d="M15 5l-4 3 1.500 2z" fill="#e02030"/></svg></button>
                    <button class="side" aria-label="Functions"><svg width="20" height="22" viewBox="0 0 20 22"><path d="M10 2.500Q5.500 1 5.500 6v12M2 8.500h7" fill="none" stroke="#222" stroke-width="1.800"/><path d="M11.500 12.500l6 6M17.500 12.500l-6 6" stroke="#333" stroke-width="2"/></svg></button>
                </aside>

                <!-- Conditional Formatting stays dimmed behind Cell Style -->
                <div class="dialog-layer">
                    <div class="dialog-back">
                        <span class="back-x"><svg width="10" height="10"><use href="#cross"/></svg></span>
                        <b class="back-label first">Conditions</b>
                        <b class="back-label second">Cell Range</b>
                        <span class="back-btn"></span>
                        <section class="dialog" role="dialog" aria-labelledby="dlg-title">
                            <header class="dialog-title">
                                <h2 id="dlg-title">Cell Style</h2>
                                <button class="dialog-x" aria-label="Close"><svg width="9" height="9"><use href="#cross"/></svg></button>
                            </header>
                            <div class="tabs upper" role="tablist">
                                <button role="tab">Alignment</button><button role="tab">Borders</button><button role="tab">Background</button><button role="tab">Cell Protection</button>
                            </div>
                            <div class="notebook">
                                <div class="tabs lower" role="tablist">
                                    <button role="tab">Organizer</button><button role="tab">Numbers</button><button role="tab">Font</button><button role="tab" class="current" aria-selected="true">Font Effects
                                        <svg class="pointer" width="18" height="26" viewBox="0 0 18 26"><path d="M1.500 1.500v19l4.500-4 3 7 3.500-1.500-3-7h6z" fill="#222" stroke="#fff" stroke-width="1.300"/></svg></button>
                                </div>
                                <form class="panel">
                                    <h3>Font Color</h3>
                                    <div class="row">
                                        <label for="f-color">Font color:</label>
                                        <div class="pick color focus"><span class="swatch black"></span><select id="f-color"><option>Black</option></select><svg width="12" height="12"><use href="#chev"/></svg></div>
                                    </div>
                                    <div class="row">
                                        <label for="f-trans">Transparency:</label>
                                        <div class="spin"><input id="f-trans" type="text" value="0%"><button type="button" aria-label="Decrease" disabled><svg width="12" height="12"><path d="M1 6.500h10" stroke="currentColor"/></svg></button><button type="button" aria-label="Increase"><svg width="12" height="12"><path d="M1 6.500h11M6.500 1v11" stroke="currentColor"/></svg></button></div>
                                    </div>
                                    <h3>Text Decoration</h3>
                                    <div class="row">
                                        <label for="f-over">Overlining:</label>
                                        <div class="pick"><select id="f-over"><option>(Without)</option></select><svg width="12" height="12"><use href="#chev"/></svg></div>
                                        <div class="pick color second off"><span class="swatch"></span><select aria-label="Overline color" disabled><option>Automatic</option></select><svg width="12" height="12"><use href="#chev"/></svg></div>
                                    </div>
                                    <div class="row">
                                        <label for="f-strike">Strikethrough:</label>
                                        <div class="pick"><select id="f-strike"><option>(Without)</option></select><svg width="12" height="12"><use href="#chev"/></svg></div>
                                    </div>
                                    <div class="row">
                                        <label for="f-under">Underlining:</label>
                                        <div class="pick"><select id="f-under"><option>(Without)</option></select><svg width="12" height="12"><use href="#chev"/></svg></div>
                                        <div class="pick color second off"><span class="swatch"></span><select aria-label="Underline color" disabled><option>Automatic</option></select><svg width="12" height="12"><use href="#chev"/></svg></div>
                                    </div>
                                    <label class="check words off"><input type="checkbox" disabled>Individual words</label>
                                    <h3>Effects</h3>
                                    <div class="row relief">
                                        <label for="f-relief">Relief:</label>
                                        <div class="pick"><select id="f-relief"><option>(Without)</option></select><svg width="12" height="12"><use href="#chev"/></svg></div>
                                        <label class="check"><input type="checkbox">Outline</label>
                                        <label class="check"><input type="checkbox">Shadow</label>
                                    </div>
                                    <div class="preview"><span>Actual</span></div>
                                </form>
                            </div>
                            <footer class="dialog-btns">
                                <button class="btn help">Help</button>
                                <button class="btn">Reset</button>
                                <button class="btn">Standard</button>
                                <button class="btn">Cancel</button>
                                <button class="btn">OK</button>
                            </footer>
                        </section>
                    </div>
                </div>
            </div>

            <footer class="statusbar">
                <span>Sheet 1 of 1</span>
                <span></span>
                <span>PageStyle_Sheet1</span>
                <span class="mid">English (Hong Kong)</span>
                <span></span>
                <span class="mid"><svg width="18" height="14" viewBox="0 0 18 14"><path d="M1.500 3.500h8v7h-8z" fill="none" stroke="#e95420" stroke-width="1.400"/><path d="M14.500 2v10M12.500 1.500h4M12.500 12.500h4" stroke="#333"/></svg></span>
                <span class="mid"><svg width="10" height="14" viewBox="0 0 10 14"><path d="M3.500 1.500h3v5h2.500l-4 5-4-5h2.500z" fill="#8cc83c" stroke="#555"/><path d="M1 12.500h8" stroke="#444"/></svg></span>
                <span></span>
                <span class="mid">Average: ; Sum: 0</span>
                <span class="zoom"><button aria-label="Zoom Out">−</button><input type="range" aria-label="Zoom" min="0" max="100" value="50"><button aria-label="Zoom In">+</button></span>
                <span>100%</span>
            </footer>
        </div>
    </div>
    <script src="script.js"></script>
</body>
</html>
```
FILE: styles.css
```css
:root {
    --orange: #e95420;
    --bg: #fafafa;
    --text: #3d3d3d;
    --line: #c6c6c6;
    --grid: #bfbfbf;
}

* { box-sizing: border-box; }

html, body { height: 100%; }

body {
    margin: 0;
    display: flex;
    flex-direction: column;
    overflow: hidden;
    background: #170d15;
    color: var(--text);
    font: 14px/18px "Noto Sans", "Open Sans", sans-serif;
}

button, input, select { font: inherit; color: inherit; }
button { border: 0; padding: 0; background: none; white-space: nowrap; }
input { min-width: 0; }
svg { display: block; flex: none; overflow: visible; }
.defs { position: absolute; width: 0; height: 0; }

/* top panel */
.topbar {
    height: 27px;
    flex: none;
    display: grid;
    grid-template-columns: 101px 1fr auto 1fr 101px;
    align-items: center;
    background: #131313;
    color: #e4e4e4;
    padding: 0 18px;
    font-size: 15px;
}
.top-btn { display: flex; align-items: center; gap: 8px; justify-self: start; }
.clock { display: flex; align-items: center; gap: 18px; padding-left: 106px; }
.tray { display: flex; grid-column: 5; gap: 11px; justify-content: flex-end; }

.desktop { flex: 1; min-height: 0; display: flex; }

/* dock */
.dock {
    width: 70px;
    flex: none;
    display: flex;
    flex-direction: column;
    align-items: center;
    gap: 4px;
    padding: 6px 3px;
    background: linear-gradient(165deg, #1b0d16, #170d15 60%, #26141f);
}
.dock-item {
    width: 64px;
    height: 64px;
    flex: none;
    display: grid;
    place-items: center;
    border-radius: 10px;
    position: relative;
}
.dock-item.active { background: #443940; }
.dock-item.active::before {
    content: "";
    position: absolute;
    left: 0;
    width: 6px;
    height: 6px;
    border-radius: 50%;
    background: var(--orange);
}
.dock-line { width: 48px; height: 1px; margin: 0; border: 0; background: #ddd; }
.apps { margin-top: auto; }

/* window */
.window {
    flex: 1;
    min-width: 0;
    display: flex;
    flex-direction: column;
    background: var(--bg);
}
.titlebar {
    height: 37px;
    flex: none;
    display: grid;
    grid-template-columns: 1fr auto 1fr;
    align-items: center;
    border-bottom: 1px solid #cfcfcf;
}
.titlebar h1 { grid-column: 2; margin: 0; font-size: 15px; font-weight: 600; color: #5c5c5c; }
.win-btns { display: flex; gap: 24px; justify-content: flex-end; padding-right: 13px; color: #444; }
.menubar {
    height: 25px;
    flex: none;
    display: flex;
    color: #5c5c5c;
}
.menus { flex: 1; display: flex; gap: 17px; padding: 2px 0 0 8px; border-bottom: 1px solid #dedede; }
.close-doc { width: 32px; display: grid; place-items: center; margin-left: -8px; }

.toolbar {
    height: 39px;
    flex: none;
    display: flex;
    align-items: center;
    padding: 0 0 1px 4px;
}
.tool {
    width: 33px;
    height: 35px;
    display: grid;
    place-items: center;
    border: 1px solid transparent;
    border-radius: 6px;
}
.tool svg { width: 24px; height: 24px; }
.tool.on { background: #d6d6d6; border-color: #bfbfbf; }
.split { display: flex; }
.drop { width: 11px; display: grid; place-items: center; }
.drop::before {
    content: "";
    border: 4px solid transparent;
    border-top-color: #000;
    border-bottom: 0;
}
.drop:disabled::before { border-top-color: #aaa; }
.sep { width: 1px; height: 33px; background: #dcdcdc; margin: 0 4px 0 3px; }
.glyph { font-family: "DejaVu Sans", sans-serif; font-weight: bold; fill: #2b2b2b; }
.glyph.it { font-style: italic; }
.glyph.dim { fill: #aaa; }
.sign { font-family: "Liberation Sans", sans-serif; }

.combo {
    height: 34px;
    display: flex;
    border: 1px solid #cdcdcd;
    border-radius: 6px;
    color: #555;
}
.combo input { flex: 1; border: 0; padding: 0 8px; background: none; }
.combo button { width: 35px; display: grid; place-items: center; border-left: 1px solid #cdcdcd; }
.combo button:disabled { color: #ccc; }
.font-name { width: 221px; margin-right: 8px; }
.font-name input { font-style: italic; }
.font-size { width: 101px; }
.name-box { width: 173px; }

/* body */
.body { flex: 1; min-height: 0; display: flex; position: relative; }
.main { flex: 1; min-width: 0; display: flex; flex-direction: column; }

.formula-bar { height: 39px; flex: none; display: flex; align-items: center; padding: 0 0 1px 4px; }
.formula-bar .sep { height: 25px; margin-right: 8px; }
.fn { width: 24px; }
.fn svg { width: 20px; height: 20px; }
.formula {
    flex: 1;
    height: 24px;
    border: 1px solid #cdcdcd;
    background: #fff;
}
.expand { width: 22px; display: grid; place-items: center; color: #bbb; }

.infobar {
    height: 40px;
    flex: none;
    display: flex;
    align-items: center;
    padding: 0 4px 0 3px;
    background: #bde5f8;
    border: 1px solid #c9cdcf;
    color: #111;
}
.infobar span { flex: 1; padding-left: 7px; }
.info-x { margin-left: 5px; padding: 0 1px; color: #004586; }
.btn {
    height: 34px;
    padding: 0 16px;
    border: 1px solid var(--line);
    border-radius: 6px;
    background: #fff;
}
.infobar .btn { background: var(--bg); border-color: #d2d2d2; color: #5c5c5c; }

/* sheet */
.sheet-area { flex: 1; min-height: 0; display: flex; }
.sheet-clip { flex: 1; min-width: 0; overflow: hidden; background: #fff; }
.sheet { border-collapse: separate; border-spacing: 0; table-layout: fixed; width: 1809px; }
.sheet th, .sheet td { padding: 0; height: 18px; border: 0 solid var(--grid); border-width: 0 1px 1px 0; }
.sheet th { background: var(--bg); font-weight: normal; border-color: #999; line-height: 17px; }
.sheet thead th { height: 20px; width: 104px; }
.sheet thead th:first-child { width: 41px; }
.sheet .tall th, .sheet .tall td { height: 21px; }
.sheet .data {
    font: 15px/16px "DejaVu Sans", sans-serif;
    color: #374151;
    vertical-align: top;
    padding-left: 1px;
    border-color: #d5d5e3;
}
.sheet .head {
    font-weight: bold;
    text-align: center;
    line-height: 18px;
    padding: 2px 0 0;
}
.sheet .ruled { border-bottom-color: #000; }
.sheet th.picked { background: var(--orange); color: #fff; font-weight: bold; border-color: #c9481b; }
.sheet .cursor { position: relative; }
.sheet .cursor::before {
    content: "";
    position: absolute;
    inset: -1px;
    border: 2px solid var(--orange);
}
.sheet .cursor::after {
    content: "";
    position: absolute;
    right: -3px;
    bottom: -3px;
    width: 5px;
    height: 5px;
    background: var(--orange);
}

.vscroll { width: 13px; display: flex; flex-direction: column; align-items: center; }
.vscroll .grip { width: 12px; height: 5px; border: solid #bbb; border-width: 2px 3px; background: #000; }
.vscroll .thumb { width: 6px; height: 350px; margin-top: 5px; border-radius: 3px; background: #8a8a8a; }
.hscroll { height: 12px; flex: none; display: flex; align-items: center; justify-content: space-between; padding: 0 13px 0 4px; }
.hscroll .thumb { width: 46.7%; height: 6px; border-radius: 3px; background: #8a8a8a; }
.hscroll .grip { width: 5px; height: 12px; border: solid #bbb; border-width: 3px 2px; background: #000; }

.tabbar { height: 25px; flex: none; display: flex; padding-left: 5px; }
.nav { width: 25px; display: grid; place-items: center; }
.nav.add { width: 38px; }
.sheet-tab { width: 65px; padding-top: 2px; font-weight: 600; background: #fff; border-bottom: 3px solid #999; }

.sidebar {
    width: 59px;
    flex: none;
    display: flex;
    flex-direction: column;
    align-items: center;
    gap: 8px;
    padding: 3px 0 0 1px;
    border-left: 1px solid #b5b5b5;
}
.side { width: 36px; height: 34px; display: grid; place-items: center; border: 1px solid transparent; border-radius: 6px; }
.side.on { background: #e6e6e6; border-color: #d0d0d0; }
.side:first-child { margin-bottom: 2px; }

/* status bar */
.statusbar {
    height: 21px;
    flex: none;
    display: grid;
    grid-template-columns: 279fr 276fr 318fr 319fr 67px 29px 30px 29px 311fr 143px 49px;
    border-top: 1px solid #b5b5b5;
    font-size: 12px;
}
.statusbar > span { display: flex; align-items: center; padding-left: 9px; border-right: 1px solid #dcdcdc; margin: 2px 0 3px; white-space: nowrap; }
.statusbar > span:last-child { border: 0; }
.statusbar > .mid { justify-content: center; padding: 0; }
.statusbar > .zoom { gap: 5px; font-weight: bold; font-size: 16px; }
.zoom input {
    appearance: none;
    width: 98px;
    height: 2px;
    margin: 0;
    background: #999;
}
.zoom input::-webkit-slider-thumb {
    appearance: none;
    width: 9px;
    height: 9px;
    border: 1px solid #555;
    border-radius: 50%;
    background: #fff;
}

/* dialogs */
.dialog-layer {
    position: absolute;
    inset: 0;
    display: grid;
    place-items: center;
    padding-bottom: 48px;
    z-index: 5;
    overflow: hidden;
}
.dialog-back {
    position: relative;
    padding: 10px 19px 8px;
    border-radius: 10px 10px 0 0;
    background: linear-gradient(#9c9c9c 37px, #8a8a8a 37px, #8a8a8a 38px, #a6a6a6 38px);
    box-shadow: 0 3px 16px rgba(0, 0, 0, .45), 0 0 1px #555;
}
.back-label { position: absolute; left: 8px; color: #222; }
.back-label.first { top: 46px; }
.back-label.second { bottom: 99px; }
.back-x {
    position: absolute;
    top: 8px;
    right: 7px;
    width: 22px;
    height: 22px;
    display: grid;
    place-items: center;
    border-radius: 50%;
    background: #909090;
}
.back-btn { position: absolute; left: 8px; right: 8px; bottom: 8px; height: 34px; border: 1px solid #7d7d7d; border-radius: 6px; }
.dialog {
    position: relative;
    width: 682px;
    border-radius: 10px 10px 0 0;
    background: var(--bg);
    box-shadow: 0 3px 18px rgba(0, 0, 0, .6), 0 0 1px 1px rgba(0, 0, 0, .35);
}
.dialog-title {
    height: 37px;
    display: grid;
    grid-template-columns: 1fr auto 1fr;
    align-items: center;
    border-radius: 10px 10px 0 0;
    border-bottom: 1px solid #bdbdbd;
    background: #ebebeb;
}
.dialog-title h2 { grid-column: 2; margin: 0; font-size: 15px; font-weight: 600; }
.dialog-x {
    justify-self: end;
    margin-right: 7px;
    width: 22px;
    height: 22px;
    display: grid;
    place-items: center;
    border-radius: 50%;
    background: #dcdcdc;
}
.tabs { display: flex; gap: 8px; padding: 0 8px 0 6px; }
.tabs button { flex: 1 1 auto; position: relative; }
.tabs.upper { height: 44px; padding: 8px 16px 0 14px; }
.tabs.lower { height: 37px; background: var(--bg); border-bottom: 1px solid var(--line); }
.tabs .current { box-shadow: inset 0 -3px var(--orange); }
.pointer { position: absolute; left: 52%; top: 50%; }
.notebook { margin: 0 8px; border: 1px solid var(--line); border-top-width: 2px; background: #fff; }

.panel { padding: 0 6px 6px; }
.panel h3 { margin: 0; font-size: 14px; line-height: 29px; font-weight: bold; }
.row {
    display: grid;
    grid-template-columns: 108px 1fr 209px;
    align-items: center;
    padding-left: 12px;
}
.row + .row { margin-top: 6px; }
.row.relief { display: flex; }
.relief > label:first-child { width: 108px; }
.relief .pick { flex: 1; margin-right: 16px; }
.relief .check + .check { margin-left: 20px; }
.relief .check:last-child { margin-right: 5px; }

.pick {
    height: 34px;
    display: flex;
    align-items: center;
    border: 1px solid var(--line);
    border-radius: 6px;
    padding: 0 11px;
}
.pick select { flex: 1; min-width: 0; appearance: none; border: 0; background: none; outline: 0; opacity: 1; }
.pick.color { width: 197px; padding: 0 18px 0 16px; }
.pick.second { margin-left: 12px; }
.pick.focus { border: 2px solid #eda58b; padding: 0 17px 0 15px; }
.pick.off { background: var(--bg); }
.off { color: #a0a0a0; }
.swatch { width: 36px; height: 15px; margin-right: 2px; border: 1px solid #888; }
.swatch.black { background: #000; }

.spin {
    width: 197px;
    height: 34px;
    display: flex;
    border: 1px solid var(--line);
    border-radius: 6px;
}
.spin input { flex: 1; border: 0; padding: 0 8px; background: none; color: #000; }
.spin button { width: 35px; display: grid; place-items: center; border-left: 1px solid #e6e6e6; }
.spin button:disabled { color: #ccc; }

.check { display: flex; align-items: center; gap: 4px; }
.check input {
    appearance: none;
    width: 16px;
    height: 16px;
    margin: 0;
    border: 1px solid #bdbdbd;
    border-radius: 3px;
    background: #fff;
}
.words { height: 22px; margin: 6px 0 0 124px; }

.preview {
    height: 87px;
    margin: 12px 12px 0;
    display: flex;
    align-items: center;
    border: 1px solid var(--line);
    color: #000;
    font: 14px/14px "Liberation Sans", sans-serif;
}
.preview::before, .preview::after { content: ""; flex: 1; height: 11px; border-bottom: 1px solid #000; }

.dialog-btns { display: flex; gap: 4px; padding: 12px 8px 8px; }
.dialog-btns .btn { width: 104px; }
.dialog-btns .help { margin-right: auto; }
```
FILE: script.js
```js
const columns = "ABCDEFGHIJKLMNOPQ".split("");

// rows 1-36: date, budget, actual, difference
const data = `Date Budget Actual Difference
1/8/2022 1506 4370 2864
5/7/2022 2024 #N/A #N/A
9/10/2021 1384 3533 2149
7/3/2022 652 2041 1389
7/15/2021 1156 #N/A #N/A
8/20/2021 333 1789 1456
9/1/2021 3983 #N/A #N/A
11/18/2021 155 #N/A #N/A
6/12/2022 397 2441 2044
1/10/2022 4448 725 -3723
4/30/2022 294 #N/A #N/A
6/30/2022 3330 4512 1182
7/1/2022 1512 #N/A #N/A
6/25/2022 2481 4112 1631
12/19/2021 3865 2211 -1654
8/19/2021 998 3799 2801
4/27/2022 709 #N/A #N/A
4/17/2022 2172 #N/A #N/A
8/28/2021 549 #N/A #N/A
3/14/2022 3746 1017 -2729
7/17/2021 1917 116 -1801
7/25/2021 3909 1167 -2742
4/21/2022 4070 #N/A #N/A
5/31/2022 231 2531 2300
2/25/2022 1222 2390 1168
2/2/2022 1710 #N/A #N/A
2/15/2022 3633 281 -3352
12/20/2021 3350 3556 206
10/27/2021 833 1896 1063
7/17/2021 3375 3452 77
7/19/2021 3238 #N/A #N/A
8/3/2021 526 #N/A #N/A
1/26/2022 3574 3826 252
8/11/2021 1846 4705 2859
8/16/2022 1796 3460 1664`.split("\n").map(line => line.split(" "));

let html = "<thead><tr><th></th>";
for (const c of columns) {
    html += `<th${c === "D" ? ' class="picked"' : ""}>${c}</th>`;
}
html += "</tr></thead><tbody>";

for (let r = 1; r <= 40; r++) {
    const tall = r === 1 || r > data.length;
    html += `<tr${tall ? ' class="tall"' : ""}><th${r === 1 ? ' class="picked"' : ""}>${r}</th>`;
    columns.forEach((c, i) => {
        const value = data[r - 1] && data[r - 1][i - 1];
        const classes = [];
        if (value) classes.push("data");
        if (value && r === 1) classes.push("head");
        if (r === 1 && c === "D") classes.push("cursor");
        if (r === 1 && c === "E") classes.push("ruled");
        html += `<td class="${classes.join(" ")}">${value || ""}</td>`;
    });
    html += "</tr>";
}

document.getElementById("sheet").innerHTML = html + "</tbody>";
```
